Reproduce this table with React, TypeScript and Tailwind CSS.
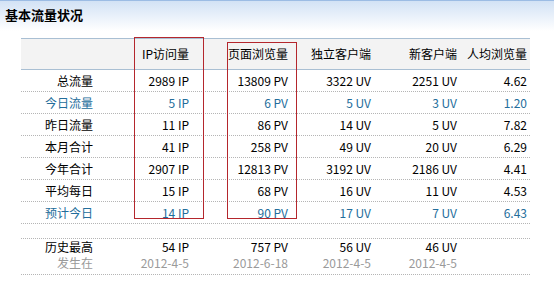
import React from "react";

type Row = { label: string; cells: string[]; tone: "black" | "blue" };

const rows: Row[] = [
  { label: "总流量", cells: ["2989 IP", "13809 PV", "3322 UV", "2251 UV", "4.62"], tone: "black" },
  { label: "今日流量", cells: ["5 IP", "6 PV", "5 UV", "3 UV", "1.20"], tone: "blue" },
  { label: "昨日流量", cells: ["11 IP", "86 PV", "14 UV", "5 UV", "7.82"], tone: "black" },
  { label: "本月合计", cells: ["41 IP", "258 PV", "49 UV", "20 UV", "6.29"], tone: "black" },
  { label: "今年合计", cells: ["2907 IP", "12813 PV", "3192 UV", "2186 UV", "4.41"], tone: "black" },
  { label: "平均每日", cells: ["15 IP", "68 PV", "16 UV", "11 UV", "4.53"], tone: "black" },
  { label: "预计今日", cells: ["14 IP", "90 PV", "17 UV", "7 UV", "6.43"], tone: "blue" },
];

const headers = ["", "IP访问量", "页面浏览量", "独立客户端", "新客户端", "人均浏览量"];
const grid = "grid grid-cols-[75px_96px_99px_83px_86px_70px]";

export default function App() {
  return (
    <div
      className="relative w-[554px] h-[281px] overflow-hidden bg-white text-[12px] text-black"
      style={{ fontFamily: '"Noto Sans CJK SC", "Liberation Sans", sans-serif' }}
    >
      <div className="h-[38px] border-t border-[#9cbce4] bg-[linear-gradient(to_bottom,#d2e2f5_0px,#ffffff_30px)] pl-[5px] pt-[5px]">
        <div className="text-[13px] font-bold leading-[18px]">基本流量状况</div>
      </div>

      <div className="ml-[21px] w-[509px]">
        <div className={`${grid} h-[32px] border-y border-[#a9bfd3] bg-[#f3f3f3]`}>
          {headers.map((h, i) => (
            <div key={i} className="flex items-center justify-end pr-[3px] whitespace-nowrap">
              {h}
            </div>
          ))}
        </div>

        {rows.map((r) => (
          <div
            key={r.label}
            className={`${grid} h-[22px] border-b border-dotted border-[#b5b5b5] ${
              r.tone === "blue" ? "text-[#236d9b]" : "text-black"
            }`}
          >
            <div className="flex items-center justify-end pr-[3px]">{r.label}</div>
            {r.cells.map((c, i) => (
              <div key={i} className="flex items-center justify-end pr-[3px] whitespace-nowrap">
                {c}
              </div>
            ))}
          </div>
        ))}

        <div className="h-[15px] border-b border-dotted border-[#b5b5b5]" />

        <div className={`${grid} h-[36px] border-b border-dotted border-[#b5b5b5] leading-[16px]`}>
          {[
            ["历史最高", "发生在"],
            ["54 IP", "2012-4-5"],
            ["757 PV", "2012-6-18"],
            ["56 UV", "2012-4-5"],
            ["46 UV", "2012-4-5"],
            ["", ""],
          ].map(([a, b], i) => (
            <div key={i} className="flex flex-col items-end pr-[3px] whitespace-nowrap">
              <span className="text-black">{a || "\u00a0"}</span>
              <span className="text-[#9a9a9a]">{b || "\u00a0"}</span>
            </div>
          ))}
        </div>
      </div>

      <div className="absolute left-[134px] top-[37px] w-[70px] h-[182px] border border-[#b4272d]" />
      <div className="absolute left-[227px] top-[42px] w-[70px] h-[177px] border border-[#b4272d]" />
    </div>
  );
}
